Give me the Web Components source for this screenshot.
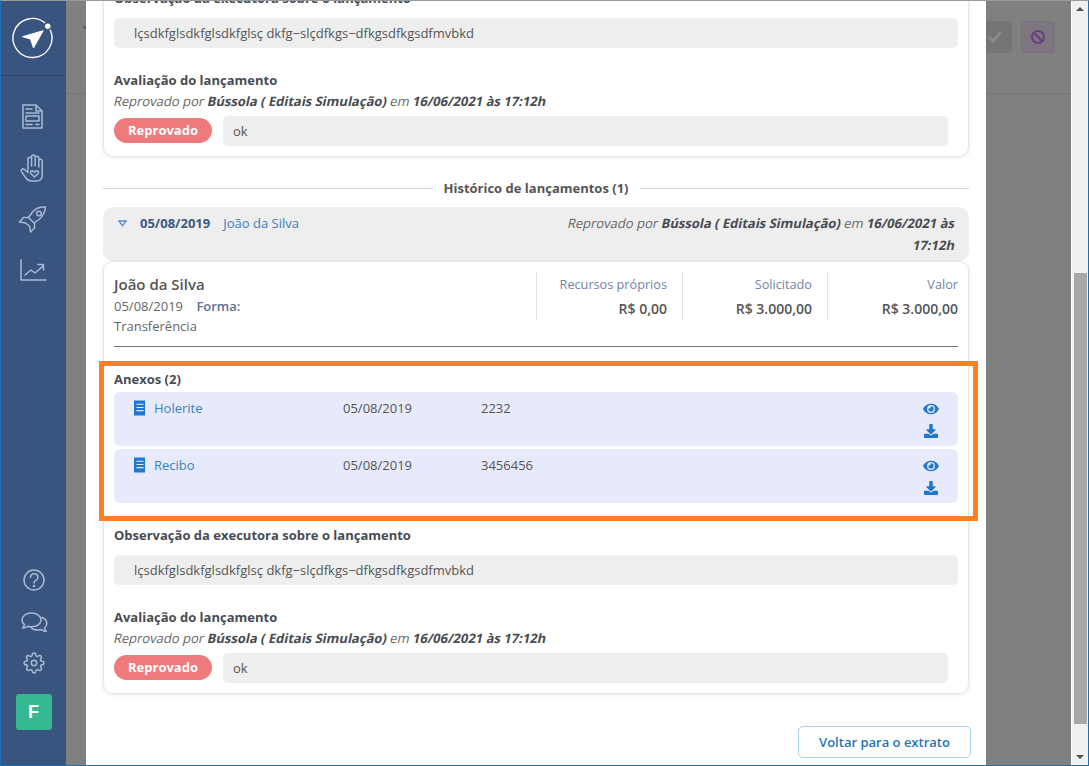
<!DOCTYPE html>
<html lang="pt-BR">
<head>
<meta charset="utf-8">
<title>Extrato</title>
<style>
	html, body { margin: 0; height: 766px; overflow: hidden; background: #808080; }
	body { font-family: 'Open Sans', sans-serif; font-size: 13px; color: #555; }
</style>
</head>
<body>
<app-window>
	<side-nav slot="nav"></side-nav>
	<page-behind slot="page"></page-behind>
	<page-scrollbar slot="scroll"></page-scrollbar>
	<modal-sheet slot="modal">
		<launch-card class="cut">
			<note-block>lçsdkfglsdkfglsdkfglsç dkfg−slçdfkgs−dfkgsdfkgsdfmvbkd</note-block>
			<eval-block></eval-block>
		</launch-card>
		<section-divider>Histórico de lançamentos (1)</section-divider>
		<history-head></history-head>
		<launch-card>
			<launch-summary></launch-summary>
			<attach-list label="Anexos (2)">
				<attach-row name="Holerite" date="05/08/2019" code="2232"></attach-row>
				<attach-row name="Recibo" date="05/08/2019" code="3456456"></attach-row>
			</attach-list>
			<note-block>lçsdkfglsdkfglsdkfglsç dkfg−slçdfkgs−dfkgsdfkgsdfmvbkd</note-block>
			<eval-block></eval-block>
		</launch-card>
		<back-button>Voltar para o extrato</back-button>
	</modal-sheet>
</app-window>

<script>
/* small helper, every element just writes its shadow once */
class Base extends HTMLElement {
	connectedCallback() {
		this.attachShadow({ mode: 'open' })
		this.shadowRoot.innerHTML = this.render()
	}
}

class AppWindow extends Base {
	render() { return `
		<style>
			:host {
				display: flex;
				position: relative;
				box-sizing: border-box;
				width: 1089px;
				height: 766px;
				overflow: hidden;
				border-top: 1px solid #9a9a9a;
				border-left: 1px solid #1b6fb3;
				border-right: 1px solid #1b6fb3;
				border-bottom: 1px solid #1b6fb3;
			}
			.page { flex: 1; display: flex; min-width: 0; }
		</style>
		<slot name="nav"></slot>
		<div class="page"><slot name="page"></slot></div>
		<slot name="scroll"></slot>
		<slot name="modal"></slot>
	`}
}

class SideNav extends Base {
	render() { return `
		<style>
			:host {
				display: flex;
				flex-direction: column;
				width: 65px;
				flex: none;
				background: #3a5480;
			}
			.logo {
				height: 74px;
				border-bottom: 1px solid #2d4469;
				display: flex;
				align-items: center;
				justify-content: center;
			}
			nav { display: flex; flex-direction: column; align-items: center; }
			.top { padding-top: 21px; gap: 11px; }
			.top svg { margin-right: 3px; }
			.bottom { margin-top: auto; padding-bottom: 35px; gap: 1.500px; }
			svg.i {
				width: 36px; height: 40px; display: block;
				fill: none; stroke: #a9b9d3; stroke-width: 1.500;
				stroke-linejoin: round; stroke-linecap: round;
			}
			.tile {
				width: 36px; height: 36px; margin-top: 9.500px;
				border-radius: 3px;
				background: #36b892;
				color: #fff;
				font: 700 18px 'Liberation Sans', sans-serif;
				display: flex; align-items: center; justify-content: center;
			}
		</style>
		<div class="logo">
			<svg width="44" height="44" viewBox="0 0 44 44">
				<path d="M33.030 7.060A19.500 19.500 0 1 0 38.170 13.760" fill="none" stroke="#fff" stroke-width="1.400"/>
				<circle cx="35.800" cy="10.300" r="2.700" fill="#fff"/>
				<path d="M31.200 14.700 L10.500 20.700 L18.500 23 L21.500 32 Z" fill="#fff" stroke="#fff" stroke-width="1" stroke-linejoin="round"/>
			</svg>
		</div>
		<nav class="top">
			<svg class="i" viewBox="0 0 36 40"><path d="M9 8h13l6 6v17H9zM22 8v6h6M12 12h6M12 16h13"/><path d="M12 19h13v5H12zM12 27.500h6M22 27.500h3"/></svg>
			<svg class="i" viewBox="0 0 36 40"><path transform="translate(1 0)" d="M13 21V11a1.800 1.800 0 0 1 3.600 0v7M16.600 18V8.800a1.800 1.800 0 0 1 3.600 0V18M20.200 18V10a1.800 1.800 0 0 1 3.600 0v9M23.800 19v-6a1.700 1.700 0 0 1 3.400 0v14c0 4-2.500 6-6 6h-5c-3 0-4-1.500-6-4l-3.500-5c-1.500-2.300 1-4 2.800-2.500l3.300 3v-2.500"/><path transform="translate(1 0)" d="M19.500 29l-3.500-3.300c-1.700-2 .9-4 2.600-2.300l.9.900.9-.9c1.700-1.700 4.300.3 2.600 2.300z"/></svg>
			<svg class="i" viewBox="0 0 36 40"><g transform="translate(1.500 0)"><path d="M30 8c-6-.5-10 1.500-13 5l-4 5.500 5.500 5.500 5.500-4c3.500-3 5.500-7 6-12zM13 18.500H8l-4 4.500 6 1M19 24v5l-4 4-1-6M10 24l4 3"/><circle cx="23.500" cy="14.500" r="2.300"/></g></svg>
			<svg class="i" viewBox="0 0 36 40"><path transform="translate(1 0)" d="M6 10v20h25M10 25l6-5 4 3 8-7M23 14.500h5.500V20"/></svg>
		</nav>
		<nav class="bottom">
			<svg class="i" viewBox="0 0 36 40"><circle cx="18" cy="20" r="10"/><path d="M14.500 17.500c0-5 7.500-4.800 7.500-.3 0 3-4 2.800-4 5.800"/><circle cx="18" cy="26" r=".6"/></svg>
			<svg class="i" viewBox="0 0 36 40"><path d="M15.500 11c-5.500 0-9.500 3-9.500 7 0 2 1 3.500 2.500 4.700-.3 1.500-1 2.500-2 3.300 2 0 3.800-.7 5-1.800 1.200.4 2.600.6 4 .6 5.500 0 9.500-3 9.500-6.800s-4-7-9.500-7z"/><path d="M25.800 15.500c3 1 5 3.300 5 6 0 2-1 3.400-2.300 4.500.2 1.400.8 2.400 1.800 3.300-2 0-3.600-.7-4.800-1.700-1.200.3-2.400.5-3.700.5-2.800 0-5.300-1-6.800-2.600"/></svg>
			<svg class="i" viewBox="0 0 36 40"><g transform="translate(18 20) scale(.9) translate(-12 -12)" stroke-width="1.700"><circle cx="12" cy="12" r="3"/><path d="M19.400 15a1.650 1.650 0 0 0 .33 1.820l.06.06a2 2 0 0 1 0 2.830 2 2 0 0 1-2.830 0l-.06-.06a1.650 1.650 0 0 0-1.820-.33 1.650 1.650 0 0 0-1 1.510V21a2 2 0 0 1-2 2 2 2 0 0 1-2-2v-.09A1.650 1.650 0 0 0 9 19.400a1.650 1.650 0 0 0-1.820.33l-.06.06a2 2 0 0 1-2.830 0 2 2 0 0 1 0-2.830l.06-.06a1.650 1.650 0 0 0 .33-1.820 1.650 1.650 0 0 0-1.510-1H3a2 2 0 0 1-2-2 2 2 0 0 1 2-2h.09A1.650 1.650 0 0 0 4.600 9a1.650 1.650 0 0 0-.33-1.820l-.06-.06a2 2 0 0 1 0-2.830 2 2 0 0 1 2.830 0l.06.06a1.650 1.650 0 0 0 1.820.33H9a1.650 1.650 0 0 0 1-1.510V3a2 2 0 0 1 2-2 2 2 0 0 1 2 2v.09a1.650 1.650 0 0 0 1 1.510 1.650 1.650 0 0 0 1.820-.33l.06-.06a2 2 0 0 1 2.830 0 2 2 0 0 1 0 2.830l-.06.06a1.650 1.650 0 0 0-.33 1.820V9a1.650 1.650 0 0 0 1.510 1H21a2 2 0 0 1 2 2 2 2 0 0 1-2 2h-.09a1.650 1.650 0 0 0-1.510 1z"/></g></svg>
			<div class="tile">F</div>
		</nav>
	`}
}

class PageBehind extends Base {
	render() { return `
		<style>
			:host { display: block; flex: 1; background: #808080; }
			header {
				box-sizing: border-box;
				height: 93px;
				border-bottom: 1px solid #757575;
				display: flex;
				padding: 20px 16px 0 14px;
				gap: 9px;
			}
			.back { color: #2d4a70; font-size: 16px; line-height: 20px; margin: -7px auto 0 0; }
			.btn {
				box-sizing: border-box;
				width: 34px; height: 32px;
				border-radius: 3px;
				display: flex; align-items: center; justify-content: center;
			}
			.ok { background: #757575; }
			.no { background: #7d767f; border: 1px solid #78727b; }
		</style>
		<header>
			<span class="back">&#8592;</span>
			<span class="btn ok"><svg width="16" height="14" viewBox="0 0 16 14"><path d="M2 7l4 4 8-9" fill="none" stroke="#8a8a8a" stroke-width="3"/></svg></span>
			<span class="btn no"><svg width="16" height="16" viewBox="0 0 16 16" fill="none" stroke="#663f80" stroke-width="2"><circle cx="8" cy="8" r="6"/><path d="M4 4l8 8"/></svg></span>
		</header>
	`}
}

class PageScrollbar extends Base {
	render() { return `
		<style>
			:host {
				display: flex;
				flex-direction: column;
				align-items: center;
				flex: none;
				width: 17px;
				box-sizing: border-box;
				background: #f1f1f1;
				border-left: 1px solid #fff;
			}
			.up, .down { width: 0; height: 0; border: 4px solid transparent; }
			.up { border-bottom: 4px solid #505050; border-top: 0; margin-top: 6px; }
			.thumb { width: 13px; height: 451px; margin-top: 262px; background: #a8a8a8; }
			.down { border-top: 4px solid #505050; border-bottom: 0; margin-top: auto; margin-bottom: 6px; }
		</style>
		<div class="up"></div>
		<div class="thumb"></div>
		<div class="down"></div>
	`}
}

class ModalSheet extends Base {
	render() { return `
		<style>
			:host {
				position: absolute;
				left: 85px;
				top: 0;
				bottom: 0;
				width: 900px;
				box-sizing: border-box;
				padding: 0 17px;
				background: #fff;
				overflow: hidden;
				display: block;
			}
		</style>
		<slot></slot>
	`}
}

class LaunchCard extends Base {
	render() { return `
		<style>
			:host {
				box-sizing: border-box;
				background: #fff;
				border: 1px solid #e6e6e6;
				border-radius: 10px;
				padding: 10px;
				box-shadow: 0 1px 4px rgba(0,0,0,.09);
				display: flex;
				flex-direction: column;
			}
			:host(.cut) { margin-top: -24px; }
		</style>
		<slot></slot>
	`}
}

class NoteBlock extends Base {
	render() { return `
		<style>
			:host { display: block; }
			h4 { margin: 0 0 10px; font-size: 13px; line-height: 20px; font-weight: 700; color: #484c52; }
			div {
				box-sizing: border-box;
				height: 30px;
				line-height: 30px;
				padding-left: 20px;
				background: #eee;
				border-radius: 5px;
				color: #555;
			}
		</style>
		<h4>Observação da executora sobre o lançamento</h4>
		<div><slot></slot></div>
	`}
}

class EvalBlock extends Base {
	render() { return `
		<style>
			:host { display: block; margin-top: 22px; }
			h4 { margin: 0; font-size: 13px; line-height: 20px; font-weight: 700; color: #484c52; }
			/* the original has a slanted regular face, wider than the real italic */
			p { margin: 1px 0 5px; line-height: 20px; color: #666; transform: skewX(-12deg); transform-origin: left center; }
			b { color: #484c52; }
			.row { display: flex; align-items: center; gap: 11px; padding-right: 10px; }
			.badge {
				flex: none;
				width: 98px; height: 25px;
				margin-top: -1px;
				line-height: 24px;
				text-align: center;
				border-radius: 13px;
				background: #ee7a7b;
				color: #fff;
				font-weight: 700;
			}
			.ok {
				flex: 1;
				height: 30px;
				line-height: 30px;
				padding-left: 10px;
				background: #eee;
				border-radius: 5px;
				color: #555;
			}
		</style>
		<h4>Avaliação do lançamento</h4>
		<p>Reprovado por <b>Bússola ( Editais Simulação)</b> em <b>16/06/2021 às 17:12h</b></p>
		<div class="row"><span class="badge">Reprovado</span><span class="ok">ok</span></div>
	`}
}

class SectionDivider extends Base {
	render() { return `
		<style>
			:host {
				display: flex;
				align-items: center;
				gap: 11px;
				margin: 21px 0 9px;
				height: 20px;
				font-size: 13px;
				font-weight: 700;
				color: #555;
			}
			i { flex: 1; height: 1px; background: #c9d5e2; }
		</style>
		<i></i><span><slot></slot></span><i></i>
	`}
}

class HistoryHead extends Base {
	render() { return `
		<style>
			:host {
				display: flex;
				box-sizing: border-box;
				height: 54px;
				padding: 5px 14px 0 15px;
				background: #eee;
				border-radius: 10px;
				line-height: 22px;
			}
			svg { flex: none; margin: 8px 13px 0 0; }
			.date { font-weight: 700; color: #3a5a80; margin-right: 13px; }
			.who { color: #3a7dbd; }
			.st { margin-left: auto; text-align: right; color: #666; }
			.st span { display: block; transform: skewX(-12deg); }
			b { color: #484c52; }
		</style>
		<svg width="9" height="7" viewBox="0 0 9 7"><path d="M.8 1h7.400L4.500 5.600z" fill="none" stroke="#5b8fc4" stroke-width="1.300"/></svg>
		<span class="date">05/08/2019</span>
		<span class="who">João da Silva</span>
		<div class="st">
			<span>Reprovado por <b>Bússola ( Editais Simulação)</b> em <b>16/06/2021 às</b></span>
			<span><b>17:12h</b></span>
		</div>
	`}
}

class LaunchSummary extends Base {
	render() { return `
		<style>
			:host {
				display: grid;
				grid-template-columns: 422px 146px 145px 131px;
				align-items: start;
				border-bottom: 1px solid #777;
				padding-bottom: 9px;
				margin-bottom: 22px;
				height: 65px;
			}
			h3 { margin: 1px 0 0; font-size: 15px; line-height: 22px; font-weight: 600; color: #555; }
			.sub { line-height: 20px; margin-top: 1px; width: 140px; color: #666; font-size: 13px; }
			.sub b { color: #5b7096; font-weight: 600; margin-left: 10px; }
			.col {
				height: 48px;
				box-sizing: border-box;
				border-left: 1px solid #dfe5ef;
				padding-right: 15px;
				text-align: right;
			}
			.col:last-child { padding-right: 0; }
			.lbl { line-height: 22px; margin-top: 1px; color: #6f85a8; font-size: 12.700px; }
			.val { line-height: 20px; margin-top: 4px; font-weight: 600; color: #555; font-size: 14px; }
		</style>
		<div>
			<h3>João da Silva</h3>
			<div class="sub">05/08/2019 <b>Forma:</b> Transferência</div>
		</div>
		<div class="col"><div class="lbl">Recursos próprios</div><div class="val">R$ 0,00</div></div>
		<div class="col"><div class="lbl">Solicitado</div><div class="val">R$ 3.000,00</div></div>
		<div class="col"><div class="lbl">Valor</div><div class="val">R$ 3.000,00</div></div>
	`}
}

class AttachList extends Base {
	render() { return `
		<style>
			:host { display: block; position: relative; margin-bottom: 22px; }
			h4 { margin: 0 0 3px; font-size: 13px; line-height: 20px; font-weight: 700; color: #484c52; }
			.list { display: flex; flex-direction: column; gap: 3px; }
			/* highlight of the screenshot, sits over the card */
			.mark {
				position: absolute;
				left: -15px; right: -20px; top: -8px; bottom: -18px;
				border: 5px solid #ff7f27;
				pointer-events: none;
			}
		</style>
		<h4>${this.getAttribute('label')}</h4>
		<div class="list"><slot></slot></div>
		<div class="mark"></div>
	`}
}

class AttachRow extends Base {
	render() { return `
		<style>
			:host {
				display: grid;
				grid-template-columns: 209px 138px 1fr 18px;
				box-sizing: border-box;
				height: 54px;
				padding: 6px 18px 0 20px;
				background: #e7eafa;
				border-radius: 6px;
				line-height: 20px;
				font-size: 13px;
				color: #555;
			}
			.name { display: flex; gap: 8px; color: #3d80c0; }
			.name svg { margin-top: 2px; }
			.acts { display: flex; flex-direction: column; align-items: center; gap: 8px; padding-top: 4px; }
			.acts svg { display: block; fill: #2277cc; }
		</style>
		<span class="name">
			<svg width="12" height="16" viewBox="0 0 12 15" preserveAspectRatio="none"><path d="M0 0l1 1 1-1 1 1 1-1 1 1 1-1 1 1 1-1 1 1 1-1 1 1v13l-1 1-1-1-1 1-1-1-1 1-1-1-1 1-1-1-1 1-1-1-1 1z" fill="#2277cc"/><path d="M2.500 4h7M2.500 7h7M2.500 10h7" stroke="#e7eafa" stroke-width="1.100"/></svg>
			${this.getAttribute('name')}
		</span>
		<span>${this.getAttribute('date')}</span>
		<span>${this.getAttribute('code')}</span>
		<div class="acts">
			<svg width="16" height="14" viewBox="0 0 576 512"><path d="M572.520 241.400C518.290 135.590 410.930 64 288 64S57.680 135.640 3.480 241.410a32.350 32.350 0 0 0 0 29.190C57.710 376.410 165.070 448 288 448s230.320-71.640 284.520-177.410a32.350 32.350 0 0 0 0-29.190zM288 400a144 144 0 1 1 144-144 143.930 143.930 0 0 1-144 144zm0-240a95.310 95.310 0 0 0-25.310 3.790 47.850 47.850 0 0 1-66.900 66.900A95.780 95.780 0 1 0 288 160z"/></svg>
			<svg width="14" height="14" viewBox="0 0 512 512"><path d="M216 0h80c13.300 0 24 10.700 24 24v168h87.700c17.800 0 26.700 21.500 14.100 34.100L269.700 378.300c-7.500 7.500-19.800 7.500-27.300 0L90.100 226.100c-12.600-12.600-3.700-34.100 14.100-34.100H192V24c0-13.300 10.700-24 24-24zm296 376v112c0 13.300-10.700 24-24 24H24c-13.300 0-24-10.700-24-24V376c0-13.300 10.700-24 24-24h146.700l49 49c20.100 20.100 52.500 20.100 72.600 0l49-49H488c13.300 0 24 10.700 24 24z"/></svg>
		</div>
	`}
}

class BackButton extends Base {
	render() { return `
		<style>
			:host { display: flex; justify-content: flex-end; margin: 32px -2px 0 0; }
			button {
				width: 173px; height: 32px;
				background: #fff;
				border: 1px solid #a9cfe9;
				border-radius: 5px;
				font: 600 13px 'Open Sans', sans-serif;
				color: #1f74b8;
			}
		</style>
		<button><slot></slot></button>
	`}
}

window.customElements.define('app-window', AppWindow)
window.customElements.define('side-nav', SideNav)
window.customElements.define('page-behind', PageBehind)
window.customElements.define('page-scrollbar', PageScrollbar)
window.customElements.define('modal-sheet', ModalSheet)
window.customElements.define('launch-card', LaunchCard)
window.customElements.define('note-block', NoteBlock)
window.customElements.define('eval-block', EvalBlock)
window.customElements.define('section-divider', SectionDivider)
window.customElements.define('history-head', HistoryHead)
window.customElements.define('launch-summary', LaunchSummary)
window.customElements.define('attach-list', AttachList)
window.customElements.define('attach-row', AttachRow)
window.customElements.define('back-button', BackButton)
</script>
</body>
</html>
